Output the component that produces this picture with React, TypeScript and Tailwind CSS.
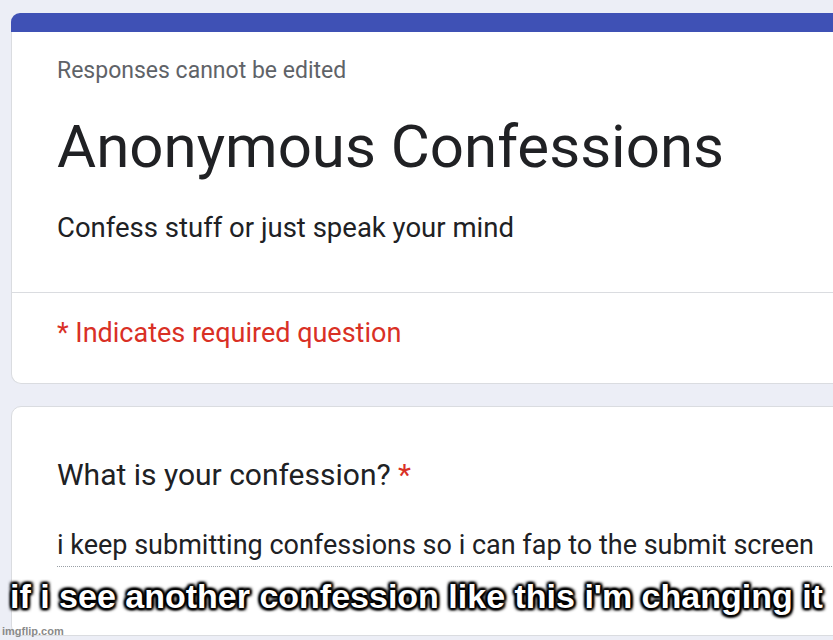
export default function App() {
  return (
    <div className="relative h-[640px] w-[833px] overflow-hidden bg-[#eceef6] pl-[11px] pt-[13px] font-['Roboto',sans-serif]">
      <section className="w-[900px]">
        <div className="h-[19px] rounded-tl-[9px] bg-[#3f51b5]" />
        <div className="rounded-bl-[10px] border-b border-l border-[#dadce0] bg-white">
          <div className="pl-[45px] pt-[26px]">
            <p className="text-[23px] leading-[26px] text-[#5f6368]">Responses cannot be edited</p>
            <h1 className="mt-[27px] text-[60px] leading-[72px] text-[#202124]">Anonymous Confessions</h1>
            <p className="mt-[29px] text-[27.5px] leading-[32px] text-[#202124]">Confess stuff or just speak your mind</p>
          </div>
          <div className="mt-[48px] border-t border-[#dadce0] pb-[34px] pl-[45px] pt-[24px]">
            <p className="text-[27px] leading-[32px] text-[#d93025]">* Indicates required question</p>
          </div>
        </div>
      </section>

      <section className="mt-[22px] h-[230px] w-[900px] rounded-l-[10px] border border-[#dadce0] bg-white pl-[45px] pt-[50px]">
        <p className="text-[30px] leading-[36px] text-[#202124]">
          What is your confession? <span className="text-[#d93025]">*</span>
        </p>
        <div className="mt-[36px] border-b border-dotted border-[#9aa0a6] pb-[5px]">
          <p className="text-[27px] leading-[32px] text-[#202124]">
            i keep submitting confessions so i can fap to the submit screen
          </p>
        </div>
      </section>

      <p className="absolute left-[10px] top-[579px] whitespace-nowrap font-['Liberation_Sans',Arial,sans-serif] text-[34px] font-bold leading-[34px] text-white [text-shadow:2px_0_2px_#000,-2px_0_2px_#000,0_2px_2px_#000,0_-2px_2px_#000,2px_2px_3px_#000,-2px_-2px_3px_#000,2px_-2px_3px_#000,-2px_2px_3px_#000]">
        if i see another confession like this i'm changing it
      </p>
      <p className="absolute left-[2px] top-[624px] font-['Liberation_Sans',Arial,sans-serif] text-[11px] font-bold leading-[14px] text-[#8a8a8a]">
        imgflip.com
      </p>
    </div>
  )
}
